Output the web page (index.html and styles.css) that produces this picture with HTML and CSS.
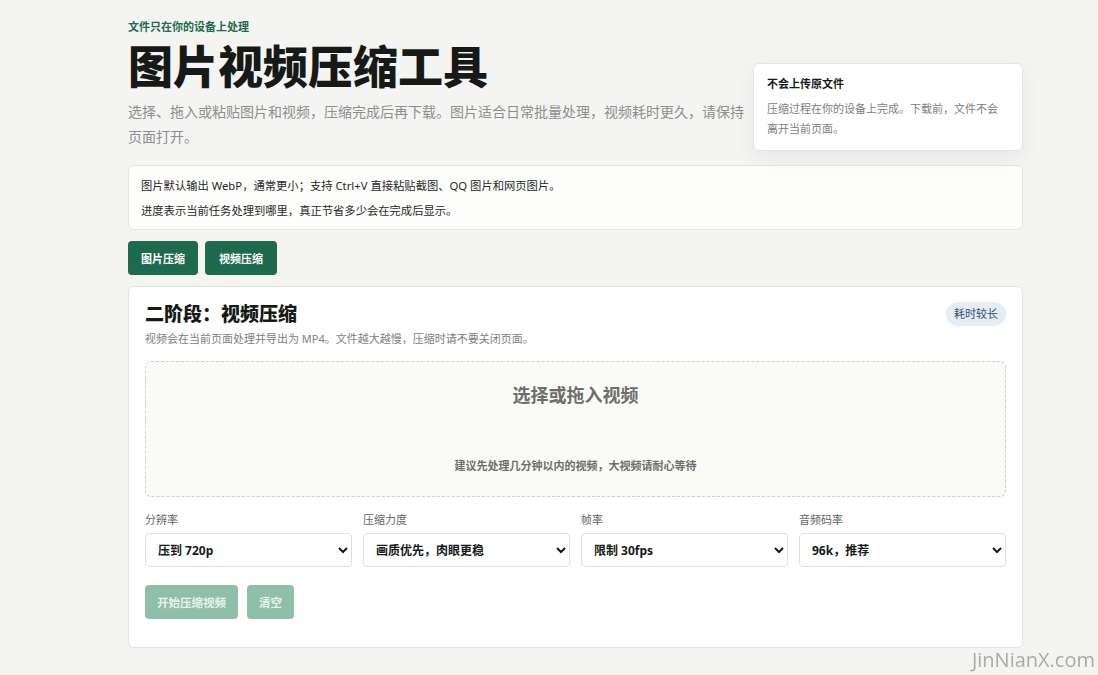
FILE: index.html
```html
<!DOCTYPE html>
<html lang="zh-CN">

<head>
    <meta charset="UTF-8">
    <meta name="viewport" content="width=device-width, initial-scale=1.0">
    <title>图片视频压缩工具</title>
    <link rel="stylesheet" href="styles.css">
</head>

<body>
    <div class="page">
        <header class="hero">
            <div class="hero-text">
                <div class="eyebrow">文件只在你的设备上处理</div>
                <h1>图片视频压缩工具</h1>
                <p class="lead">选择、拖入或粘贴图片和视频，压缩完成后再下载。图片适合日常批量处理，视频耗时更久，请保持页面打开。</p>
            </div>
            <aside class="privacy-card">
                <h3>不会上传原文件</h3>
                <p>压缩过程在你的设备上完成。下载前，文件不会离开当前页面。</p>
            </aside>
        </header>

        <div class="notice">
            <p>图片默认输出 WebP，通常更小；支持 Ctrl+V 直接粘贴截图、QQ 图片和网页图片。</p>
            <p>进度表示当前任务处理到哪里，真正节省多少会在完成后显示。</p>
        </div>

        <div class="tabs">
            <button class="tab">图片压缩</button>
            <button class="tab active">视频压缩</button>
        </div>

        <section class="panel">
            <div class="panel-head">
                <div>
                    <h2>二阶段：视频压缩</h2>
                    <p class="panel-sub">视频会在当前页面处理并导出为 MP4。文件越大越慢，压缩时请不要关闭页面。</p>
                </div>
                <span class="badge">耗时较长</span>
            </div>

            <label class="dropzone">
                <input type="file" accept="video/*" hidden>
                <span class="drop-title">选择或拖入视频</span>
                <span class="drop-hint">建议先处理几分钟以内的视频，大视频请耐心等待</span>
            </label>

            <div class="options">
                <div class="field">
                    <label for="resolution">分辨率</label>
                    <select id="resolution">
                        <option>压到 720p</option>
                        <option>保持原始</option>
                        <option>压到 1080p</option>
                        <option>压到 480p</option>
                    </select>
                </div>
                <div class="field">
                    <label for="strength">压缩力度</label>
                    <select id="strength">
                        <option>画质优先，肉眼更稳</option>
                        <option>均衡</option>
                        <option>体积优先</option>
                    </select>
                </div>
                <div class="field">
                    <label for="fps">帧率</label>
                    <select id="fps">
                        <option>限制 30fps</option>
                        <option>保持原始</option>
                        <option>限制 24fps</option>
                    </select>
                </div>
                <div class="field">
                    <label for="audio">音频码率</label>
                    <select id="audio">
                        <option>96k，推荐</option>
                        <option>128k</option>
                        <option>64k</option>
                    </select>
                </div>
            </div>

            <div class="actions">
                <button class="btn" disabled>开始压缩视频</button>
                <button class="btn" disabled>清空</button>
            </div>
        </section>
    </div>

    <div class="watermark">JinNianX.com</div>
</body>

</html>
```

FILE: styles.css
```css
body {
    margin: 0;
    background: #f4f4f2;
    color: #1b1f1c;
    font-family: "Noto Sans", "Noto Sans CJK SC", sans-serif;
}

.page {
    width: 895px;
    margin: 0 0 0 128px;
    padding: 18px 0 27px;
}

.hero {
    display: flex;
    justify-content: space-between;
    align-items: flex-start;
}

.hero-text {
    width: 620px;
}

.eyebrow {
    font-size: 11px;
    font-weight: 700;
    color: #1d6a4f;
    line-height: 18px;
}

h1 {
    margin: 2px 0 0;
    font-size: 45px;
    font-weight: 900;
    line-height: 58px;
    color: #161a17;
}

.lead {
    margin: 3px 0 0;
    font-size: 14px;
    line-height: 25px;
    color: #8c8f8c;
}

.privacy-card {
    width: 270px;
    box-sizing: border-box;
    margin-top: 45px;
    padding: 11px 16px 11px 13px;
    background: #fff;
    border: 1px solid #e4e4e0;
    border-radius: 6px;
    box-shadow: 0 6px 22px rgba(0, 0, 0, 0.06);
}

.privacy-card h3 {
    margin: 0;
    font-size: 11px;
    font-weight: 700;
    line-height: 18px;
    color: #161a17;
}

.privacy-card p {
    margin: 6px 0 0;
    font-size: 11px;
    line-height: 20px;
    color: #7d807d;
}

.notice {
    margin-top: 14px;
    padding: 7px 12px 6px;
    background: #fdfdfc;
    border: 1px solid #e4e4e0;
    border-radius: 6px;
}

.notice p {
    margin: 0;
    font-size: 11.3px;
    line-height: 25px;
    color: #262a27;
}

.tabs {
    display: flex;
    gap: 7px;
    margin-top: 11px;
}

.tab {
    height: 34px;
    padding: 0 13px;
    border: 0;
    border-radius: 4px;
    background: #1d6a4f;
    color: #fff;
    font-family: inherit;
    font-size: 11px;
    font-weight: 700;
}

.tab.active {
    padding: 0 14px;
}

.panel {
    margin-top: 11px;
    padding: 13px 16px 28px;
    background: #fff;
    border: 1px solid #e4e4e0;
    border-radius: 6px;
}

.panel-head {
    display: flex;
    justify-content: space-between;
    align-items: flex-start;
}

h2 {
    margin: 0;
    font-size: 19px;
    font-weight: 800;
    line-height: 28px;
    color: #161a17;
}

.panel-sub {
    margin: 2px 0 0;
    font-size: 11px;
    line-height: 18px;
    color: #7d807d;
}

.badge {
    margin-top: 2px;
    padding: 3px 8px;
    border-radius: 12px;
    background: #e7edf5;
    color: #2d4d77;
    font-size: 11px;
    line-height: 18px;
}

.dropzone {
    display: flex;
    flex-direction: column;
    align-items: center;
    height: 134px;
    margin-top: 13px;
    border: 1px dashed #cdcdca;
    border-radius: 6px;
    background: #fafaf7;
    cursor: pointer;
}

.drop-title {
    margin-top: 19px;
    font-size: 18px;
    font-weight: 700;
    line-height: 28px;
    color: #6b6e6b;
}

.drop-hint {
    margin-top: 49px;
    font-size: 11px;
    font-weight: 700;
    line-height: 16px;
    color: #6b6e6b;
}

.options {
    display: grid;
    grid-template-columns: repeat(4, 1fr);
    gap: 11px;
    margin-top: 14px;
}

.field label {
    display: block;
    font-size: 11px;
    line-height: 18px;
    color: #636663;
}

.field select {
    width: 100%;
    height: 34px;
    margin-top: 4px;
    padding: 0 6px 0 8px;
    border: 1px solid #dfdfdc;
    border-radius: 4px;
    background: #fff;
    color: #161a17;
    font-family: inherit;
    font-size: 12px;
    font-weight: 700;
}

.actions {
    display: flex;
    gap: 9px;
    margin-top: 18px;
}

.btn {
    height: 34px;
    padding: 0 12px;
    border: 0;
    border-radius: 4px;
    background: #8fbfa9;
    color: #e9f3ee;
    font-family: inherit;
    font-size: 11.5px;
    font-weight: 700;
}

.watermark {
    position: fixed;
    right: 3px;
    bottom: 0;
    font-family: "Open Sans", sans-serif;
    font-size: 20px;
    line-height: 30px;
    color: rgba(120, 120, 120, 0.6);
}
```
